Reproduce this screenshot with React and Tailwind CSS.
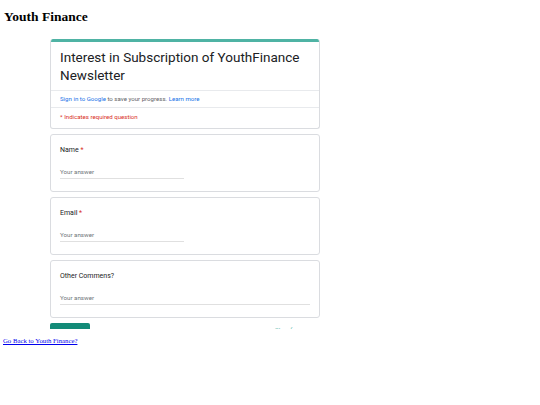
const FONT = { fontFamily: 'Roboto, "Liberation Sans", sans-serif' };

function Question({ label, required, wide }) {
  return (
    <div className="mt-[5px] h-[58px] rounded-[3px] border border-[#dadce0] bg-white px-[9px] pt-[11px]">
      <div className="text-[7px] leading-[9px] text-[#202124]">
        {label}
        {required && <span className="text-[#d93025]"> *</span>}
      </div>
      <div className={`mt-[13px] border-b border-[#e0e0e0] pb-[2px] text-[6.2px] leading-[8px] text-[#70757a] ${wide ? 'w-full' : 'w-[124px]'}`}>
        Your answer
      </div>
    </div>
  );
}

export default function App() {
  return (
    <div className="h-[405px] w-[540px] bg-white">
      <h1 className="ml-[4px] pt-[9px] text-[13.5px] font-bold leading-[15.5px] text-black" style={{ fontFamily: '"Liberation Serif", serif' }}>
        Youth Finance
      </h1>

      {/* embedded form, cut off at the frame bottom */}
      <div className="ml-[50px] h-[304px] w-[270px] overflow-hidden pt-[14px]" style={FONT}>
        <div className="overflow-hidden rounded-[3px] border border-[#dadce0] border-t-0 bg-white">
          <div className="h-[3px] bg-[#4fb3a4]"></div>
          <div className="px-[9px] pb-[6px] pt-[6px] text-[13.5px] leading-[18px] text-[#202124]">
            Interest in Subscription of YouthFinance Newsletter
          </div>
          <div className="border-t border-[#e8eaed] px-[9px] py-[4px] text-[6.1px] leading-[8px] text-[#5f6368]">
            <span className="text-[#1a73e8]">Sign in to Google</span> to save your progress.{' '}
            <span className="text-[#1a73e8]">Learn more</span>
          </div>
          <div className="border-t border-[#e8eaed] px-[9px] pb-[6px] pt-[4px] text-[6.1px] leading-[10px] text-[#d93025]">
            * Indicates required question
          </div>
        </div>

        <Question label="Name" required />
        <Question label="Email" required />
        <Question label="Other Commens?" wide />

        <div className="mt-[5px] flex items-start justify-between">
          <div className="h-[14px] w-[40px] rounded-[2px] bg-[#138b78]"></div>
          <div className="mr-[17px] mt-[3px] text-[6px] leading-[8px] text-[#4fb3a4]">Clear form</div>
        </div>
      </div>

      <div className="ml-[3px] mt-[8px] text-[6.75px] leading-[8px]" style={{ fontFamily: '"Liberation Serif", serif' }}>
        <a href="#" className="text-[#0000ee] underline">Go Back to Youth Finance?</a>
      </div>
    </div>
  );
}
